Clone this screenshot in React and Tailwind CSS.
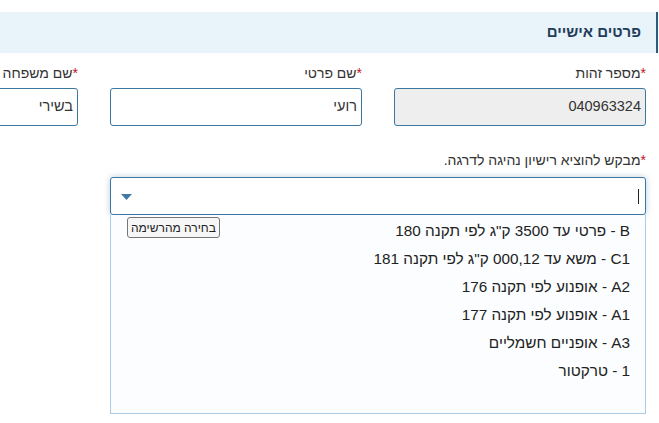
import React from "react";

const options = [
  'B - פרטי עד 3500 ק"ג לפי תקנה 180',
  'C1 - משא עד 000,12 ק"ג לפי תקנה 181',
  "A2 - אופנוע לפי תקנה 176",
  "A1 - אופנוע לפי תקנה 177",
  "A3 - אופניים חשמליים",
  "1 - טרקטור",
];

function Field({ label, value, disabled }) {
  return (
    <div className="w-[252px] shrink-0 flex flex-col">
      <label className="h-[22px] text-[14px] leading-[22px] text-[#333] mb-[4px] whitespace-nowrap">
        <span className="text-[#c0141e]">*</span>
        {label}
      </label>
      <div
        className={`h-[38px] border border-[#3c77a2] rounded-[3px] px-[4px] flex items-center text-[14.5px] text-[#333] ${
          disabled ? "bg-[#eeeeee]" : "bg-white"
        }`}
      >
        {value}
      </div>
    </div>
  );
}

export default function App() {
  return (
    <div
      dir="rtl"
      className="w-[659px] h-[423px] overflow-hidden bg-white"
      style={{ fontFamily: '"Liberation Sans", Arial, sans-serif' }}
    >
      <div className="h-[12px]" />
      <div className="h-[41px] bg-[#e8f3fa] border-r-2 border-[#2b5c80] mr-[1px] flex items-center pr-[15px]">
        <h2 className="text-[15px] font-bold text-[#1f3c59]">פרטים אישיים</h2>
      </div>
      <div className="pr-[13px] pt-[9px]">
        <div className="flex gap-[32px]">
          <Field label="מספר זהות" value={<span dir="ltr">040963324</span>} disabled />
          <Field label="שם פרטי" value="רועי" />
          <Field label="שם משפחה" value="בשירי" />
        </div>
        <div className="w-[536px] mt-[23px]">
          <label className="block h-[22px] text-[14px] leading-[22px] text-[#333] mb-[6px]">
            <span className="text-[#c0141e]">*</span>
            מבקש להוציא רישיון נהיגה לדרגה.
          </label>
          <div className="h-[38px] border border-[#3c77a2] rounded-[3px] bg-white shadow-[0_0_6px_rgba(60,119,162,0.35)] flex items-center justify-between px-[6px]">
            <span className="w-px h-[15px] bg-[#222]" />
            <svg width="11" height="6" viewBox="0 0 11 6" className="ml-[4px] mt-[2px]">
              <path d="M0 0 L11 0 L5.5 6 Z" fill="#3f7aa5" />
            </svg>
          </div>
          <div className="relative h-[199px] border border-t-0 border-[#a9cbe4] bg-[#fbfdfe] pt-[5px] pr-[15px]">
            {options.map((o) => (
              <div key={o} className="h-[28px] text-[15.3px] leading-[22px] text-[#222]">
                {o}
              </div>
            ))}
            <button className="absolute left-[16px] top-[2px] h-[21px] px-[3px] text-[12px] leading-[18px] text-[#222] bg-[#f6f6f6] border border-[#767676] rounded-[3px]">
              בחירה מהרשימה
            </button>
          </div>
        </div>
      </div>
    </div>
  );
}
